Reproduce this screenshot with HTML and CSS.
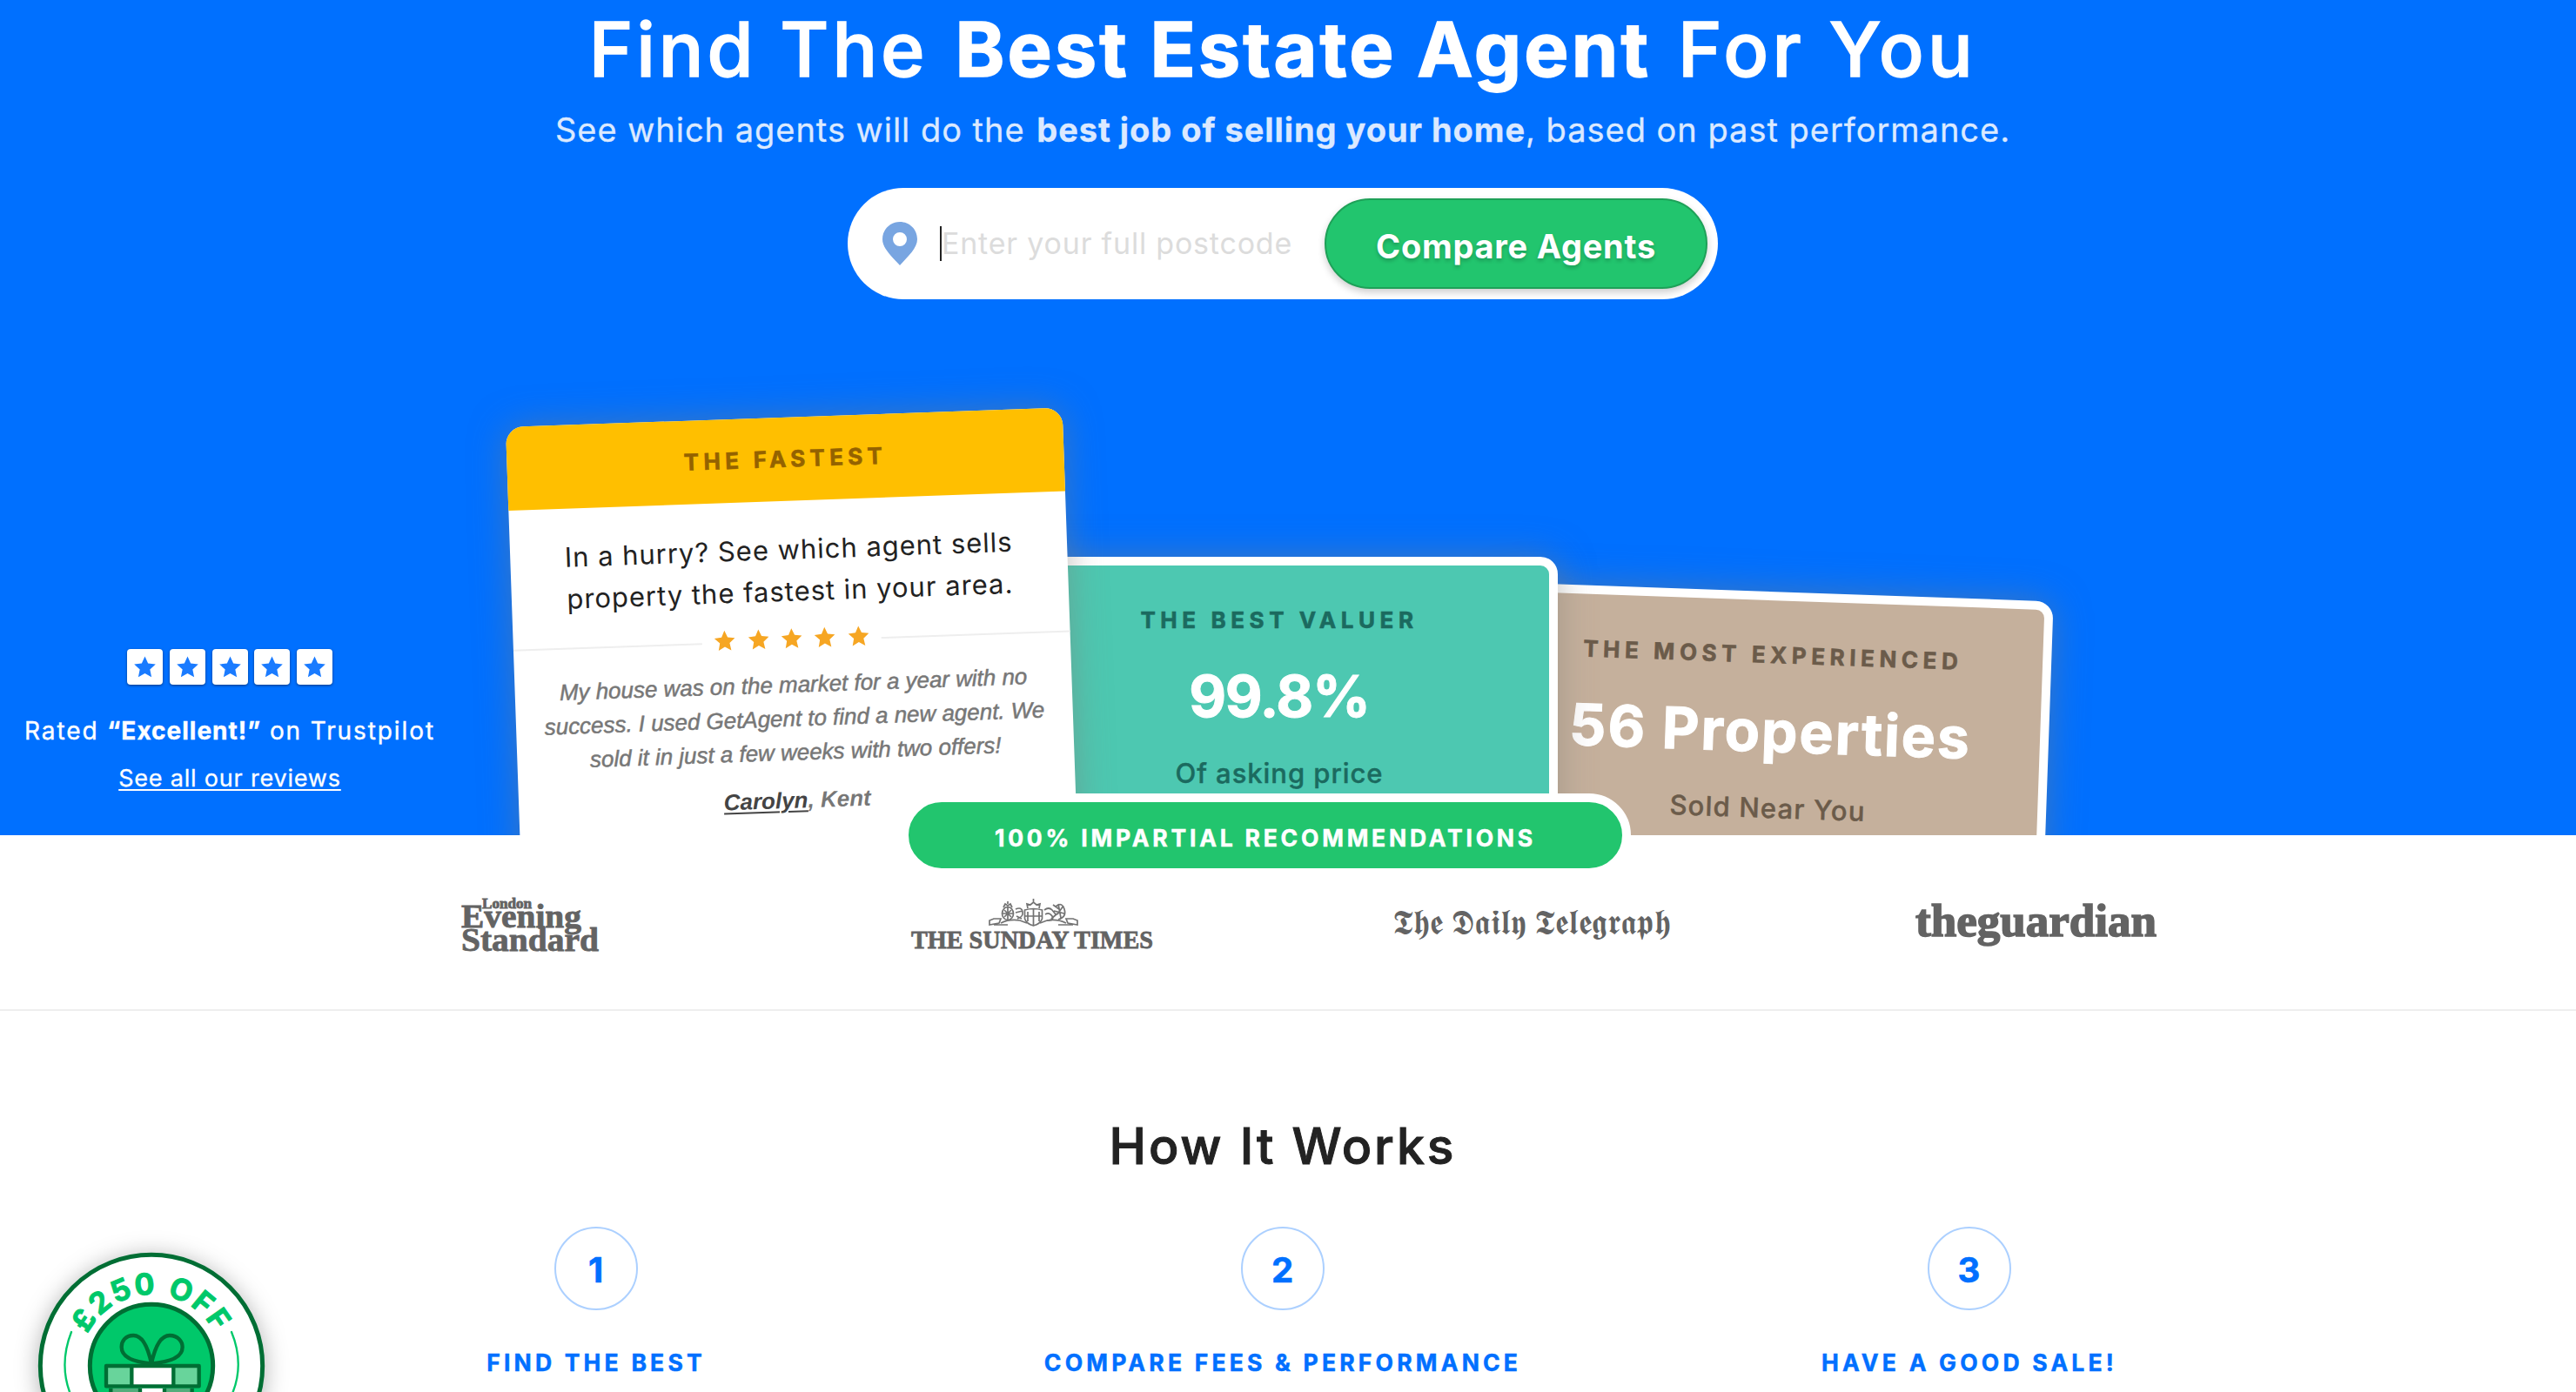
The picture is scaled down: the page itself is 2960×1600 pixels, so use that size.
FILE: index.html
```html
<!DOCTYPE html>
<html lang="en">
<head>
<meta charset="utf-8">
<title>Find The Best Estate Agent For You</title>
<link rel="stylesheet" href="styles.css">
</head>
<body>
<svg class="defs" width="0" height="0"><symbol id="star" viewBox="0 0 24 24"><path d="M12 0.5l3.500 7.700 8.300 1-6.200 5.700 1.700 8.400L12 19.100l-7.300 4.200 1.700-8.400L.2 9.200l8.300-1z"/></symbol></svg>
<header class="hero">
  <div class="intro">
    <h1 class="title"><span class="title-start">Find The</span> <strong>Best Estate Agent</strong> <span class="title-end">For You</span></h1>
    <p class="subtitle">See which agents will do the <strong>best job of selling your home</strong>, based on past performance.</p>
    <form class="search">
      <svg class="pin" viewBox="0 0 40 50"><path fill-rule="evenodd" d="M20 0C9 0 0 8.500 0 20c0 10 10 19 20 30 10-11 20-20 20-30C40 8.500 31 0 20 0zm0 12a8 8 0 1 1 0 16 8 8 0 0 1 0-16z"/></svg>
      <div class="field">Enter your full postcode</div>
      <button class="cta" type="button">Compare Agents</button>
    </form>
  </div>
  <div class="showcase">
    <aside class="trust">
      <div class="boxes">
        <i><svg><use href="#star"/></svg></i><i><svg><use href="#star"/></svg></i><i><svg><use href="#star"/></svg></i><i><svg><use href="#star"/></svg></i><i><svg><use href="#star"/></svg></i>
      </div>
      <p class="rated">Rated <strong>“Excellent!”</strong> on Trustpilot</p>
      <a class="reviews">See all our reviews</a>
    </aside>
    <div class="deck">
      <article class="card fastest">
        <h2 class="label">THE FASTEST</h2>
        <p class="pitch">In a hurry? See which agent sells<br>property the fastest in your area.</p>
        <div class="stars"><svg><use href="#star"/></svg><svg><use href="#star"/></svg><svg><use href="#star"/></svg><svg><use href="#star"/></svg><svg><use href="#star"/></svg></div>
        <p class="quote">My house was on the market for a year with no<br>success. I used GetAgent to find a new agent. We<br>sold it in just a few weeks with two offers!</p>
        <p class="author"><u>Carolyn</u>, Kent</p>
      </article>
      <article class="card valuer">
        <h2 class="label">THE BEST VALUER</h2>
        <p class="figure">99.8%</p>
        <p class="note">Of asking price</p>
      </article>
      <article class="card experienced">
        <h2 class="label">THE MOST EXPERIENCED</h2>
        <p class="figure">56 Properties</p>
        <p class="note">Sold Near You</p>
      </article>
    </div>
  </div>
</header>
<section class="press">
  <div class="pill">100% IMPARTIAL RECOMMENDATIONS</div>
  <div class="logos">
    <svg width="158" height="64" viewBox="0 0 158 64"><text x="24" y="14" font-size="16" textLength="57" lengthAdjust="spacingAndGlyphs">London</text><text x="0" y="36" font-size="37" textLength="138" lengthAdjust="spacingAndGlyphs">Evening</text><text x="0" y="63" font-size="37" textLength="158" lengthAdjust="spacingAndGlyphs">Standard</text></svg>
    <svg width="278" height="64" viewBox="0 0 278 64">
      <g class="crest">
        <path d="M90 33v-5l5-2h8l-2 5zM103 31q10-5 22-3l8 3M191 33v-5l-5-2h-8l2 5zM178 31q-10-5-22-3l-8 3M95 33h16m58 0h17"/>
        <ellipse cx="111" cy="20" rx="6.500" ry="7.500"/><path d="M106 13l2-4 3 2 3-2 2 4M111 9V6M105 20h12M111 13v15M107 16l8 8m0-8l-8 8"/>
        <path d="M130.500 16q10-3 20 0v10q-2 6-10 8-8-2-10-8zM140.500 15v19M131 23h19M134 18v11m13-11v11M134 14l-1-5 4 1 3.500-3 3.500 3 4-1-1 5M140.500 8V3"/>
        <path d="M120 15q7-3 8 3t-6 8M120 19l8-2M121 23l6 3M153 16q5-4 9 0l4 5M154 21q5-3 8 2t-6 5M161 26l7-6M166 12q7-6 10 3t-7 12M163 10l7 5M169 9l3 16M175 11l-7 10M164 17l12 3"/>
      </g>
      <text x="0" y="60" font-size="30" textLength="278" lengthAdjust="spacingAndGlyphs">THE SUNDAY TIMES</text></svg>
    <svg class="telegraph" width="320" height="64" viewBox="0 0 320 64"><text x="0" y="44" font-size="40" textLength="320" lengthAdjust="spacingAndGlyphs">𝕿𝖍𝖊 𝕯𝖆𝖎𝖑𝖞 𝕿𝖊𝖑𝖊𝖌𝖗𝖆𝖕𝖍</text></svg>
    <svg class="guardian" width="278" height="64" viewBox="0 0 278 64"><text x="0" y="46" font-size="52" textLength="277" lengthAdjust="spacingAndGlyphs">theguardian</text></svg>
  </div>
</section>
<section class="how">
  <h2 class="heading">How It Works</h2>
  <div class="steps">
    <div class="step"><b class="num">1</b><h3>FIND THE BEST</h3></div>
    <div class="step"><b class="num">2</b><h3>COMPARE FEES &amp; PERFORMANCE</h3></div>
    <div class="step"><b class="num">3</b><h3>HAVE A GOOD SALE!</h3></div>
  </div>
</section>
<svg class="offer" viewBox="0 0 1080 600">
  <circle class="disc" cx="522" cy="510" r="383"/>
  <circle class="core" cx="522" cy="510" r="212"/>
  <path class="arc" d="M246 393Q204 500 240 600M798 393Q842 500 803 600"/>
  <path id="curve" fill="none" d="M276 510a246 246 0 0 1 492 0"/>
  <text class="off"><textPath href="#curve" startOffset="114" textLength="538">£250 OFF</textPath></text>
  <g class="gift">
    <path fill="#52ad7b" d="M382 587h280v40H382z"/><path fill="#fff" d="M483 587h84v40h-84z"/><path d="M382 587v40M483 587v40M567 587v40M662 587v40"/>
    <path fill="#68d49b" d="M366 510h320v70H366z"/><path fill="#fff" d="M454 514h144v64H454z"/><path d="M366 510h320v70H366zM454 510v70M598 510v70"/>
    <path d="M522 502C512 455 495 405 460 405C432 405 419 425 419 445C419 480 460 497 522 502C532 455 550 405 585 405C613 405 629 425 629 445C629 480 586 497 522 502"/>
  </g>
</svg>
</body>
</html>
```
FILE: styles.css
```css
* { box-sizing: border-box; }
body { margin: 0; position: relative; height: 1600px; overflow: hidden; background: #fff; color: #222; font-family: Inter, "Liberation Sans", sans-serif; }
h1, h2, h3, p { margin: 0; font-weight: 400; }
.defs { position: absolute; }
strong { font-weight: 700; }

.hero { height: 960px; overflow: hidden; background: #0070ff; color: #fff; }
.intro { width: 2948px; display: flex; flex-direction: column; align-items: center; }
.title { font-size: 86px; line-height: 114px; white-space: nowrap; font-weight: 500; -webkit-text-stroke: 1.500px #fff; }
.title-start { letter-spacing: 3.900px; }
.title strong { margin: 0 8px; letter-spacing: 3.190px; }
.title-end { letter-spacing: 4.500px; }
.subtitle { margin-top: 11px; font-size: 38px; line-height: 48px; letter-spacing: .98px; color: #dbe9ff; -webkit-text-stroke: .3px #dbe9ff; white-space: nowrap; }
.subtitle strong { margin-left: 2px; letter-spacing: .95px; }
.search { margin-top: 43px; width: 1000px; height: 128px; padding: 12px 12px 12px 40px; display: flex; align-items: center; background: #fff; border-radius: 64px; }
.pin { width: 40px; height: 50px; fill: #78a5e1; }
.field { margin-left: 26px; border-left: 2px solid #222; flex: 1; height: 40px; font-size: 34px; line-height: 40px; letter-spacing: .8px; color: #dcdcdc; white-space: nowrap; }
.cta { width: 440px; height: 104px; padding: 5px 0 0; border: 2px solid #1ea158; border-radius: 52px; background: #22c56e; box-shadow: 0 4px 8px rgba(0,0,0,.2); color: #fff; font: 700 38px/96px Inter, sans-serif; letter-spacing: .75px; text-shadow: 0 3px 4px rgba(0,0,0,.2); white-space: nowrap; }

.showcase { display: flex; align-items: flex-start; }
.trust { width: 528px; padding-top: 402px; display: flex; flex-direction: column; align-items: center; white-space: nowrap; }
.boxes { display: flex; gap: 7.750px; }
.boxes i { width: 41px; height: 41px; display: flex; align-items: center; justify-content: center; border-radius: 4px; background: #fff; box-shadow: 0 1px 3px rgba(0,0,0,.5); }
.boxes svg { width: 25px; height: 25px; fill: #1a7bff; }
.rated { margin-top: 33px; font-size: 28px; line-height: 40px; letter-spacing: 1.900px; -webkit-text-stroke: .4px #fff; }
.rated strong { letter-spacing: 1px; }
.reviews { margin-top: 15px; font-size: 27px; line-height: 40px; letter-spacing: .8px; -webkit-text-stroke: .3px #fff; text-decoration: underline; text-decoration-thickness: 2px; text-underline-offset: 3px; }

.deck { display: flex; align-items: flex-start; margin-left: 53px; }
.card { position: relative; flex: none; width: 640px; height: 640px; border-radius: 20px; text-align: center; white-space: nowrap; box-shadow: 0 0 40px rgba(130,125,120,.5); transform-origin: 0 0; }
.label { font-size: 26px; font-weight: 700; line-height: 48px; letter-spacing: 5.570px; -webkit-text-stroke: .6px; }
.figure { font-size: 66px; font-weight: 700; line-height: 80px; color: #fff; -webkit-text-stroke: 1px #fff; }
.note { font-size: 31px; font-weight: 500; line-height: 48px; -webkit-text-stroke: .4px; }
.fastest { z-index: 3; margin-top: 147px; transform: rotate(-2deg); background: #fff; color: #222; }
.fastest .label { line-height: 96px; letter-spacing: 5.300px; background: #ffbf00; color: #946200; border-radius: 20px 20px 0 0; }
.pitch { padding-top: 32px; font-size: 31px; line-height: 48px; letter-spacing: .98px; }
.stars { display: flex; align-items: center; justify-content: center; gap: 14.400px; height: 24px; margin-top: 20px; }
.stars::before, .stars::after { content: ""; flex: 1; height: 2px; margin-top: 2px; background: #eee; }
.stars svg { width: 24px; height: 24px; margin-top: -4px; fill: #f6a623; }
.quote, .author { font: italic 26px/39px "Liberation Sans", sans-serif; color: #777; }
.quote { margin-top: 20px; letter-spacing: -.03px; -webkit-text-stroke: .5px #777; }
.author { margin-top: 16px; font-weight: 700; }
.author u { color: #444; text-decoration-thickness: 2px; text-underline-offset: 3px; }
.valuer, .experienced { padding-top: 39px; border: 10px solid #fff; }
.valuer .figure, .experienced .figure { margin-top: 23px; }
.valuer .note, .experienced .note { margin-top: 25px; }
.valuer { z-index: 2; margin: 296px 0 0 -71px; background: #4dc8b1; color: #1b6a5f; }
.valuer .figure { letter-spacing: -1.300px; }
.valuer .note { letter-spacing: .95px; }
.experienced { z-index: 1; margin: 325px 0 0 -70px; transform: rotate(2deg); background: #c5b09c; color: #6b5b4a; }
.experienced .figure { letter-spacing: 1.950px; }
.experienced .note { letter-spacing: 1.170px; }

.press { position: relative; z-index: 4; height: 202px; border-bottom: 2px solid #eee; }
.pill { width: 840px; height: 96px; margin: 0 0 0 1034px; position: relative; top: -48px; border: 10px solid #fff; border-radius: 48px; background: #22c56e; color: #fff; font-size: 26.500px; font-weight: 700; line-height: 82px; letter-spacing: 3.780px; -webkit-text-stroke: .5px #fff; text-align: center; white-space: nowrap; }
.logos { width: 2307px; margin: -26px 0 0 321px; display: grid; grid-template-columns: repeat(4, 1fr); justify-items: center; }
.logos svg { overflow: visible; fill: #636363; stroke: #636363; stroke-width: .8; font-family: "Liberation Serif", serif; font-weight: 700; }
.logos .crest { fill: none; stroke: #737373; stroke-width: 1.700; }
.logos .telegraph { margin-left: -6px; stroke: none; font-weight: 400; }
.logos .guardian { stroke-width: 1.600; }

.how { width: 2948px; padding-top: 116px; }
.heading { font-size: 57px; font-weight: 500; line-height: 80px; letter-spacing: 2.950px; -webkit-text-stroke: 1px #222; text-align: center; color: #222; }
.steps { width: 2367px; margin: 52px auto 0; display: grid; grid-template-columns: repeat(3, 1fr); }
.step { display: flex; flex-direction: column; align-items: center; color: #0070ff; }
.num { width: 96px; height: 96px; padding-right: 1px; border: 2px solid #acd0ff; border-radius: 50%; font-size: 40px; line-height: 95px; text-align: center; -webkit-text-stroke: .6px #0070ff; }
.step h3 { margin-top: 40px; font-size: 26.500px; font-weight: 700; line-height: 40px; letter-spacing: 4.200px; -webkit-text-stroke: .5px #0070ff; white-space: nowrap; }

.offer { position: absolute; left: 0; top: 1400px; width: 360px; height: 200px; }
.disc { fill: #fff; stroke: #006e34; stroke-width: 15; filter: drop-shadow(0 10px 40px rgba(0,0,0,.3)); }
.core { fill: #00c86a; stroke: #006e34; stroke-width: 15; }
.arc { fill: none; stroke: #00c86a; stroke-width: 7; stroke-linecap: round; }
.off { font-size: 102px; font-weight: 700; fill: #00c86a; stroke: #00c86a; stroke-width: 3; stroke-linejoin: round; }
.gift path { stroke: #006e34; stroke-width: 13; stroke-linejoin: round; }
.gift path[fill] { stroke: none; }
.gift path:not([fill]) { fill: none; }
```
